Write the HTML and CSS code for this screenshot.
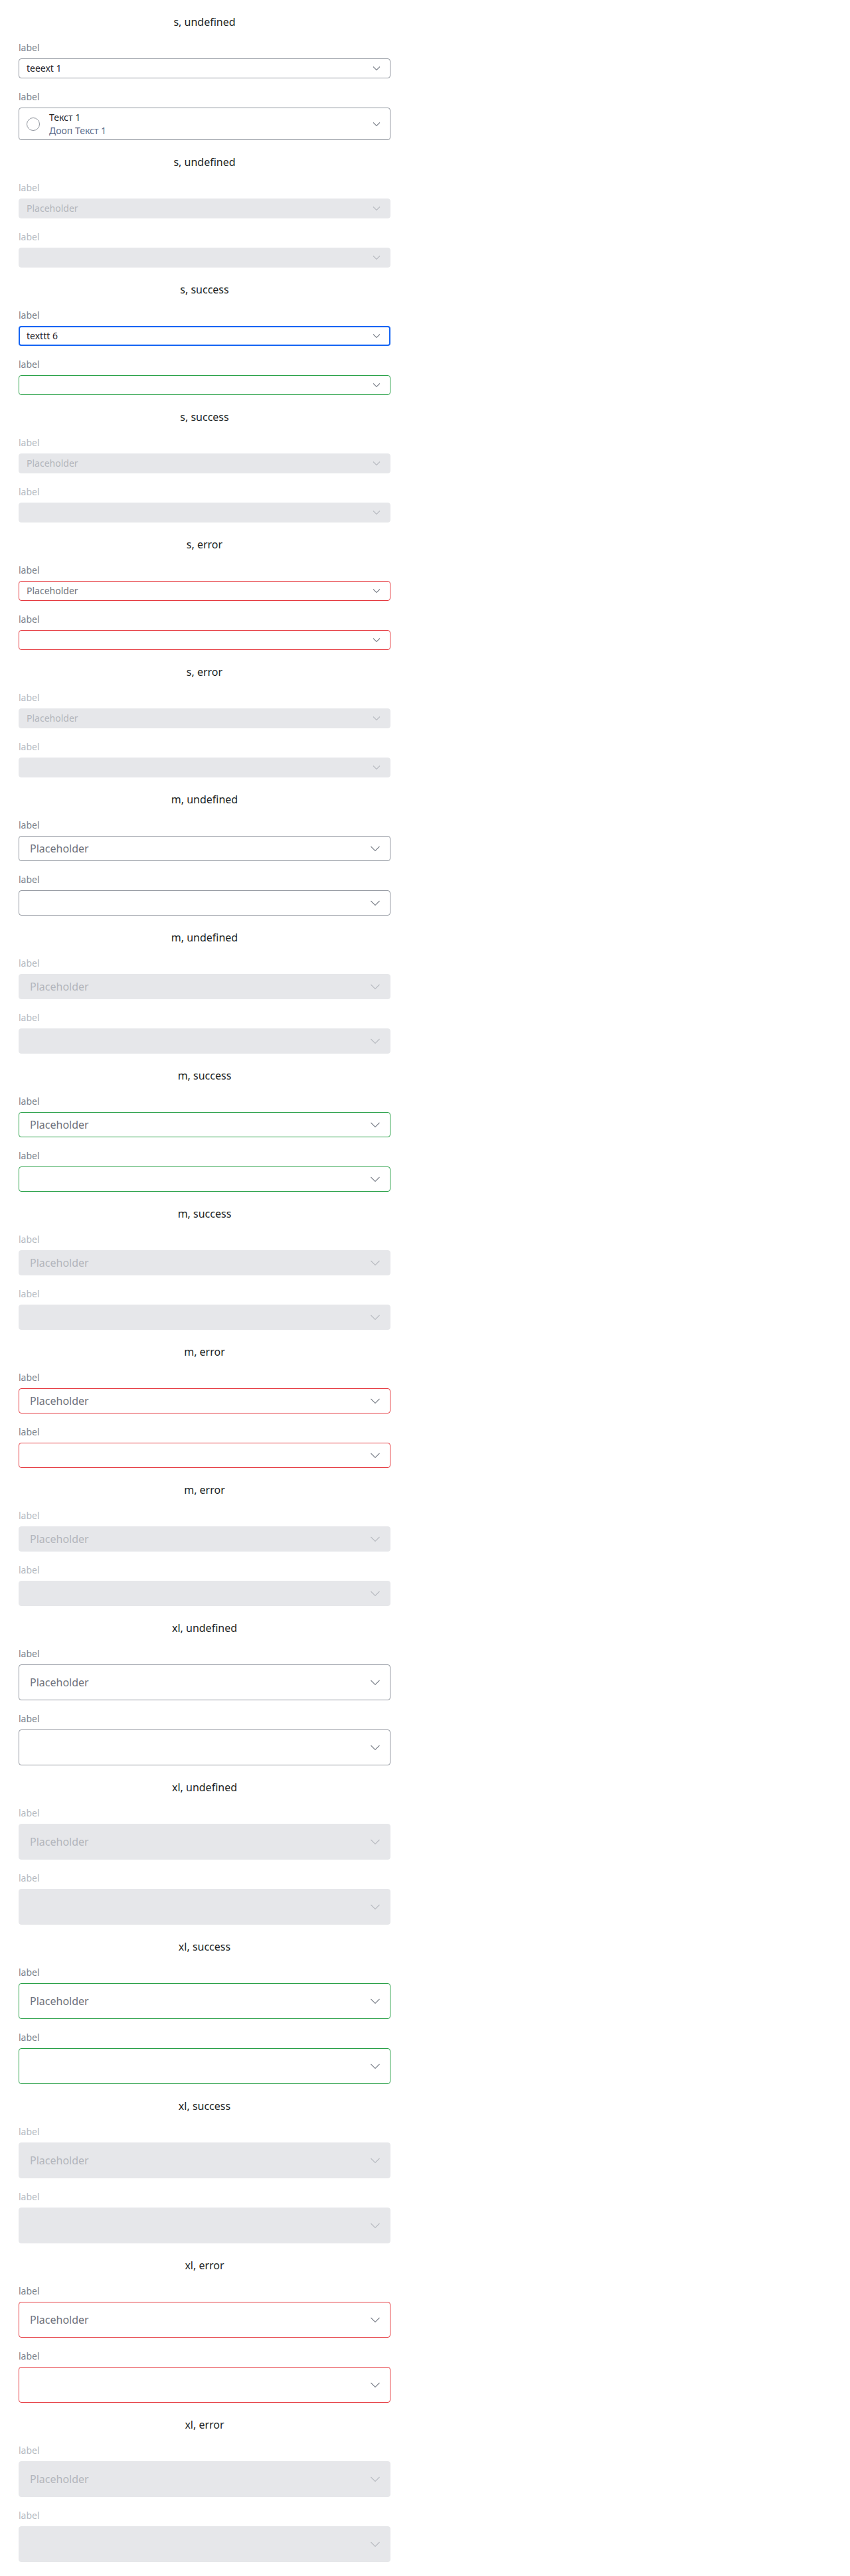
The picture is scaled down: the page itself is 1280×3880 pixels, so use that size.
FILE: index.html
```html
<!DOCTYPE html>
<html lang="ru">
<head>
<meta charset="utf-8">
<title>Select states</title>
<link rel="stylesheet" href="styles.css">
</head>
<body>
<div class="page">

  <section class="section">
    <div class="title">s, undefined</div>
    <div class="field">
      <div class="label">label</div>
      <div class="select s"><span class="value">teeext 1</span><svg class="chev" viewBox="0 0 12 12"><path d="M1 3.5 6 8.5 11 3.5"/></svg></div>
    </div>
    <div class="field">
      <div class="label">label</div>
      <div class="select s rich">
        <span class="radio"></span>
        <span class="value lines"><span class="main">Текст 1</span><span class="sub">Дооп Текст 1</span></span>
        <svg class="chev" viewBox="0 0 12 12"><path d="M1 3.5 6 8.5 11 3.5"/></svg>
      </div>
    </div>
  </section>

  <section class="section disabled">
    <div class="title">s, undefined</div>
    <div class="field">
      <div class="label">label</div>
      <div class="select s"><span class="value ph">Placeholder</span><svg class="chev" viewBox="0 0 12 12"><path d="M1 3.5 6 8.5 11 3.5"/></svg></div>
    </div>
    <div class="field">
      <div class="label">label</div>
      <div class="select s"><span class="value"></span><svg class="chev" viewBox="0 0 12 12"><path d="M1 3.5 6 8.5 11 3.5"/></svg></div>
    </div>
  </section>

  <section class="section">
    <div class="title">s, success</div>
    <div class="field">
      <div class="label">label</div>
      <div class="select s focus"><span class="value">texttt 6</span><svg class="chev" viewBox="0 0 12 12"><path d="M1 3.5 6 8.5 11 3.5"/></svg></div>
    </div>
    <div class="field">
      <div class="label">label</div>
      <div class="select s success"><span class="value"></span><svg class="chev" viewBox="0 0 12 12"><path d="M1 3.5 6 8.5 11 3.5"/></svg></div>
    </div>
  </section>

  <section class="section disabled">
    <div class="title">s, success</div>
    <div class="field">
      <div class="label">label</div>
      <div class="select s"><span class="value ph">Placeholder</span><svg class="chev" viewBox="0 0 12 12"><path d="M1 3.5 6 8.5 11 3.5"/></svg></div>
    </div>
    <div class="field">
      <div class="label">label</div>
      <div class="select s"><span class="value"></span><svg class="chev" viewBox="0 0 12 12"><path d="M1 3.5 6 8.5 11 3.5"/></svg></div>
    </div>
  </section>

  <section class="section">
    <div class="title">s, error</div>
    <div class="field">
      <div class="label">label</div>
      <div class="select s error"><span class="value ph">Placeholder</span><svg class="chev" viewBox="0 0 12 12"><path d="M1 3.5 6 8.5 11 3.5"/></svg></div>
    </div>
    <div class="field">
      <div class="label">label</div>
      <div class="select s error"><span class="value"></span><svg class="chev" viewBox="0 0 12 12"><path d="M1 3.5 6 8.5 11 3.5"/></svg></div>
    </div>
  </section>

  <section class="section disabled">
    <div class="title">s, error</div>
    <div class="field">
      <div class="label">label</div>
      <div class="select s"><span class="value ph">Placeholder</span><svg class="chev" viewBox="0 0 12 12"><path d="M1 3.5 6 8.5 11 3.5"/></svg></div>
    </div>
    <div class="field">
      <div class="label">label</div>
      <div class="select s"><span class="value"></span><svg class="chev" viewBox="0 0 12 12"><path d="M1 3.5 6 8.5 11 3.5"/></svg></div>
    </div>
  </section>

  <section class="section">
    <div class="title">m, undefined</div>
    <div class="field">
      <div class="label">label</div>
      <div class="select m"><span class="value ph">Placeholder</span><svg class="chev" viewBox="0 0 16 16"><path d="M1.5 5 8 11.5 14.5 5"/></svg></div>
    </div>
    <div class="field">
      <div class="label">label</div>
      <div class="select m"><span class="value"></span><svg class="chev" viewBox="0 0 16 16"><path d="M1.5 5 8 11.5 14.5 5"/></svg></div>
    </div>
  </section>

  <section class="section disabled">
    <div class="title">m, undefined</div>
    <div class="field">
      <div class="label">label</div>
      <div class="select m"><span class="value ph">Placeholder</span><svg class="chev" viewBox="0 0 16 16"><path d="M1.5 5 8 11.5 14.5 5"/></svg></div>
    </div>
    <div class="field">
      <div class="label">label</div>
      <div class="select m"><span class="value"></span><svg class="chev" viewBox="0 0 16 16"><path d="M1.5 5 8 11.5 14.5 5"/></svg></div>
    </div>
  </section>

  <section class="section">
    <div class="title">m, success</div>
    <div class="field">
      <div class="label">label</div>
      <div class="select m success"><span class="value ph">Placeholder</span><svg class="chev" viewBox="0 0 16 16"><path d="M1.5 5 8 11.5 14.5 5"/></svg></div>
    </div>
    <div class="field">
      <div class="label">label</div>
      <div class="select m success"><span class="value"></span><svg class="chev" viewBox="0 0 16 16"><path d="M1.5 5 8 11.5 14.5 5"/></svg></div>
    </div>
  </section>

  <section class="section disabled">
    <div class="title">m, success</div>
    <div class="field">
      <div class="label">label</div>
      <div class="select m"><span class="value ph">Placeholder</span><svg class="chev" viewBox="0 0 16 16"><path d="M1.5 5 8 11.5 14.5 5"/></svg></div>
    </div>
    <div class="field">
      <div class="label">label</div>
      <div class="select m"><span class="value"></span><svg class="chev" viewBox="0 0 16 16"><path d="M1.5 5 8 11.5 14.5 5"/></svg></div>
    </div>
  </section>

  <section class="section">
    <div class="title">m, error</div>
    <div class="field">
      <div class="label">label</div>
      <div class="select m error"><span class="value ph">Placeholder</span><svg class="chev" viewBox="0 0 16 16"><path d="M1.5 5 8 11.5 14.5 5"/></svg></div>
    </div>
    <div class="field">
      <div class="label">label</div>
      <div class="select m error"><span class="value"></span><svg class="chev" viewBox="0 0 16 16"><path d="M1.5 5 8 11.5 14.5 5"/></svg></div>
    </div>
  </section>

  <section class="section disabled">
    <div class="title">m, error</div>
    <div class="field">
      <div class="label">label</div>
      <div class="select m"><span class="value ph">Placeholder</span><svg class="chev" viewBox="0 0 16 16"><path d="M1.5 5 8 11.5 14.5 5"/></svg></div>
    </div>
    <div class="field">
      <div class="label">label</div>
      <div class="select m"><span class="value"></span><svg class="chev" viewBox="0 0 16 16"><path d="M1.5 5 8 11.5 14.5 5"/></svg></div>
    </div>
  </section>

  <section class="section">
    <div class="title">xl, undefined</div>
    <div class="field">
      <div class="label">label</div>
      <div class="select xl"><span class="value ph">Placeholder</span><svg class="chev" viewBox="0 0 16 16"><path d="M1.5 5 8 11.5 14.5 5"/></svg></div>
    </div>
    <div class="field">
      <div class="label">label</div>
      <div class="select xl"><span class="value"></span><svg class="chev" viewBox="0 0 16 16"><path d="M1.5 5 8 11.5 14.5 5"/></svg></div>
    </div>
  </section>

  <section class="section disabled">
    <div class="title">xl, undefined</div>
    <div class="field">
      <div class="label">label</div>
      <div class="select xl"><span class="value ph">Placeholder</span><svg class="chev" viewBox="0 0 16 16"><path d="M1.5 5 8 11.5 14.5 5"/></svg></div>
    </div>
    <div class="field">
      <div class="label">label</div>
      <div class="select xl"><span class="value"></span><svg class="chev" viewBox="0 0 16 16"><path d="M1.5 5 8 11.5 14.5 5"/></svg></div>
    </div>
  </section>

  <section class="section">
    <div class="title">xl, success</div>
    <div class="field">
      <div class="label">label</div>
      <div class="select xl success"><span class="value ph">Placeholder</span><svg class="chev" viewBox="0 0 16 16"><path d="M1.5 5 8 11.5 14.5 5"/></svg></div>
    </div>
    <div class="field">
      <div class="label">label</div>
      <div class="select xl success"><span class="value"></span><svg class="chev" viewBox="0 0 16 16"><path d="M1.5 5 8 11.5 14.5 5"/></svg></div>
    </div>
  </section>

  <section class="section disabled">
    <div class="title">xl, success</div>
    <div class="field">
      <div class="label">label</div>
      <div class="select xl"><span class="value ph">Placeholder</span><svg class="chev" viewBox="0 0 16 16"><path d="M1.5 5 8 11.5 14.5 5"/></svg></div>
    </div>
    <div class="field">
      <div class="label">label</div>
      <div class="select xl"><span class="value"></span><svg class="chev" viewBox="0 0 16 16"><path d="M1.5 5 8 11.5 14.5 5"/></svg></div>
    </div>
  </section>

  <section class="section">
    <div class="title">xl, error</div>
    <div class="field">
      <div class="label">label</div>
      <div class="select xl error"><span class="value ph">Placeholder</span><svg class="chev" viewBox="0 0 16 16"><path d="M1.5 5 8 11.5 14.5 5"/></svg></div>
    </div>
    <div class="field">
      <div class="label">label</div>
      <div class="select xl error"><span class="value"></span><svg class="chev" viewBox="0 0 16 16"><path d="M1.5 5 8 11.5 14.5 5"/></svg></div>
    </div>
  </section>

  <section class="section disabled">
    <div class="title">xl, error</div>
    <div class="field">
      <div class="label">label</div>
      <div class="select xl"><span class="value ph">Placeholder</span><svg class="chev" viewBox="0 0 16 16"><path d="M1.5 5 8 11.5 14.5 5"/></svg></div>
    </div>
    <div class="field">
      <div class="label">label</div>
      <div class="select xl"><span class="value"></span><svg class="chev" viewBox="0 0 16 16"><path d="M1.5 5 8 11.5 14.5 5"/></svg></div>
    </div>
  </section>

</div>
</body>
</html>
```

FILE: styles.css
```css
body {
  margin: 0;
  background: #ffffff;
  font-family: "Noto Sans", "Open Sans", sans-serif;
  color: #1f2329;
}

.page {
  width: 560px;
  margin-left: 28px;
  padding: 21px 0;
}

.section {
  display: flex;
  flex-direction: column;
}

.section + .section {
  margin-top: 21px;
}

.title {
  font-size: 16px;
  line-height: 24px;
  text-align: center;
  color: #1b1f24;
  margin-bottom: 17px;
}

.field + .field {
  margin-top: 18px;
}

.label {
  font-size: 14px;
  line-height: 20px;
  color: #7e828b;
  margin-bottom: 6px;
}

.select {
  display: flex;
  align-items: center;
  box-sizing: border-box;
  border: 1px solid #8e939c;
  border-radius: 4px;
  background: #ffffff;
  padding: 0 14px 0 11px;
  color: #1f2329;
}

.select .value {
  flex: 1;
  white-space: nowrap;
}

.select .ph {
  color: #6f737c;
}

.chev {
  flex: none;
  fill: none;
  stroke: #7f848d;
  stroke-width: 1.1;
}

.s {
  height: 30px;
  font-size: 14px;
  line-height: 20px;
}

.s .chev {
  width: 12px;
  height: 12px;
}

.m {
  height: 38px;
  font-size: 16px;
  line-height: 22px;
  padding-left: 16px;
}

.xl {
  height: 54px;
  font-size: 16px;
  line-height: 22px;
  padding-left: 16px;
}

.m .chev,
.xl .chev {
  width: 16px;
  height: 16px;
}

.s.rich {
  height: 49px;
}

.radio {
  flex: none;
  width: 20px;
  height: 20px;
  box-sizing: border-box;
  border: 1px solid #8e939c;
  border-radius: 50%;
  margin-right: 14px;
}

.lines {
  display: flex;
  flex-direction: column;
}

.lines .main {
  color: #1f2329;
}

.lines .sub {
  color: #5b6a88;
}

.focus {
  border: 2px solid #1464f4;
  padding-left: 10px;
  padding-right: 13px;
}

.success {
  border-color: #27a046;
}

.error {
  border-color: #e5393f;
}

.disabled .label {
  color: #b6b9bf;
}

.disabled .select {
  background: #e6e7ea;
  border-color: #e6e7ea;
}

.disabled .select .ph {
  color: #b3b6bc;
}

.disabled .chev {
  stroke: #b8bbc1;
}
```
